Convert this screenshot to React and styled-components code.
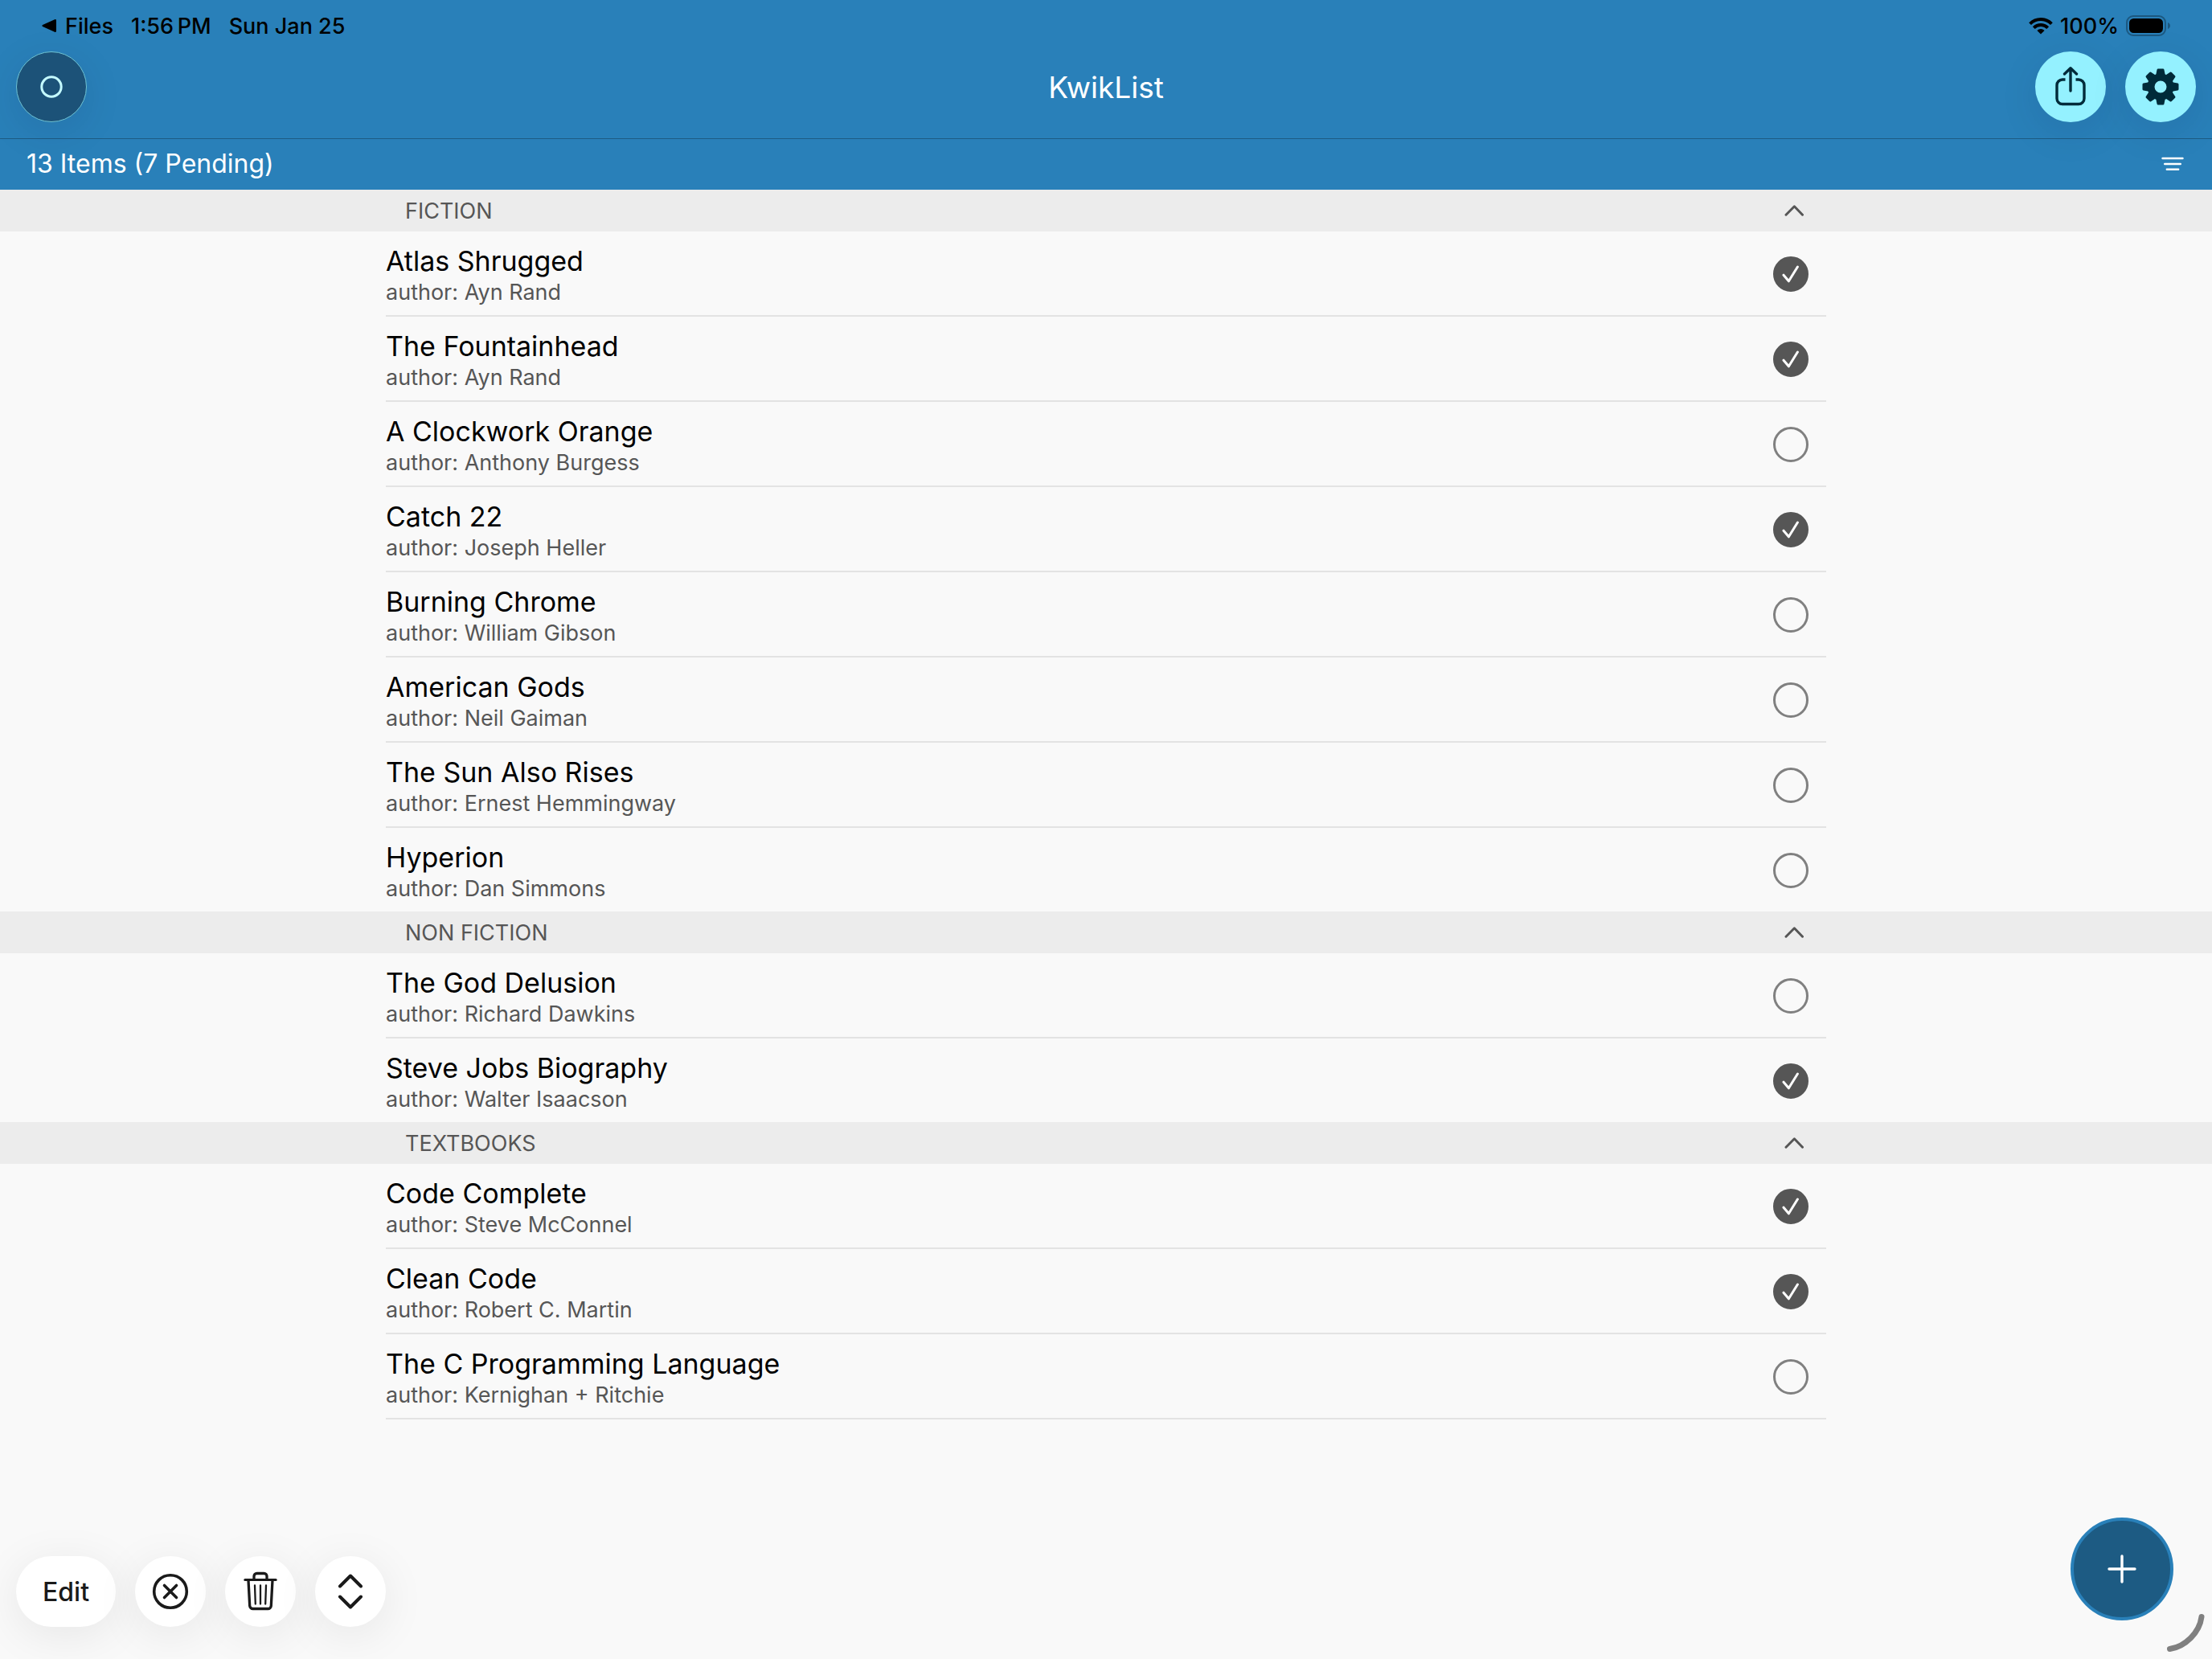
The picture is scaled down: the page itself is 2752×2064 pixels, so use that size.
import React, { useState } from 'react';
import styled, { createGlobalStyle, ThemeProvider } from 'styled-components';

const theme = {
  colors: {
    primary: '#2980b9',
    primaryDark: '#1d5b83',
    navDark: '#1c5278',
    accent: '#94f1ff',
    accentInk: '#002b3a',
    background: '#f9f9f9',
    section: '#ececec',
    line: '#e3e3e3',
    text: '#000000',
    muted: '#565656',
    outline: '#808080',
    ink: '#1a1a1a',
  },
  fonts: {
    body: 'Inter, "Liberation Sans", sans-serif',
  },
  fontSizes: {
    small: '27px',
    medium: '32px',
    title: '34px',
    large: '37px',
  },
};

const GlobalStyle = createGlobalStyle`
  *, *::before, *::after {
    box-sizing: border-box;
  }

  body {
    margin: 0;
    background: ${props => props.theme.colors.background};
    font-family: ${props => props.theme.fonts.body};
  }

  button, input {
    font-family: inherit;
    margin: 0;
  }

  svg {
    display: block;
    flex: none;
  }
`;

const Page = styled.div`
  min-height: 100vh;
  display: flex;
  flex-direction: column;
`;

const Header = styled.header`
  background: ${props => props.theme.colors.primary};
  color: white;
`;

const StatusBar = styled.div`
  display: flex;
  justify-content: space-between;
  align-items: center;
  height: 64px;
  padding: 0 52px 0 51px;
  color: black;
  font-size: ${props => props.theme.fontSizes.small};
  font-weight: 500;
`;

const StatusGroup = styled.div`
  display: flex;
  align-items: center;
  gap: ${props => props.gap}px;
`;

const BackLink = styled.a`
  display: flex;
  align-items: center;
  gap: 10px;
  color: inherit;
  text-decoration: none;
`;

const NavBar = styled.nav`
  display: grid;
  grid-template-columns: 1fr auto 1fr;
  align-items: center;
  padding: 0 20px 20px;
  border-bottom: 1px solid ${props => props.theme.colors.primaryDark};
`;

const NavGroup = styled.div`
  display: flex;
  justify-content: ${props => props.align};
  gap: 24px;
`;

const Title = styled.h1`
  margin: 0;
  font-size: ${props => props.theme.fontSizes.large};
  font-weight: 400;
`;

const RoundButton = styled.button`
  display: flex;
  align-items: center;
  justify-content: center;
  width: 88px;
  height: 88px;
  padding: 0;
  border: none;
  border-radius: 50%;
  background: ${props => props.theme.colors.accent};
  color: ${props => props.theme.colors.accentInk};
  box-shadow: 0 12px 48px rgba(20, 20, 60, 0.1);
  cursor: pointer;
`;

const ListButton = styled(RoundButton)`
  border: 1px solid #6fc3d3;
  background: ${props => props.theme.colors.navDark};
  color: #c4faff;
`;

const Summary = styled.div`
  display: flex;
  justify-content: space-between;
  align-items: center;
  height: 63px;
  padding: 0 35px 2px 33px;
  font-size: ${props => props.theme.fontSizes.medium};
`;

const PlainButton = styled.button`
  padding: 0;
  border: none;
  background: none;
  color: inherit;
  cursor: pointer;
`;

const Main = styled.main`
  flex: 1;
`;

const Column = styled.div`
  max-width: 1792px;
  margin: 0 auto;
`;

const SectionBar = styled.h2`
  margin: 0;
  background: ${props => props.theme.colors.section};
`;

const SectionToggle = styled.button`
  display: flex;
  justify-content: space-between;
  align-items: center;
  width: 100%;
  height: 52px;
  padding: 0 28px 0 24px;
  border: none;
  background: none;
  color: ${props => props.theme.colors.muted};
  font-size: ${props => props.theme.fontSizes.small};
  text-transform: uppercase;
  cursor: pointer;

  svg {
    transform: ${props => (props.$open ? 'none' : 'rotate(180deg)')};
  }
`;

const Items = styled.ul`
  list-style: none;
  margin: 0;
  padding: 0;
`;

const Item = styled.li`
  border-bottom: 2px solid ${props => props.theme.colors.line};

  section:not(:last-child) &:last-child {
    border-bottom: none;
  }
`;

const ItemLabel = styled.label`
  display: flex;
  justify-content: space-between;
  align-items: center;
  height: 104px;
  padding: 2px 22px 0 0;
  cursor: pointer;
`;

const ItemText = styled.span`
  display: flex;
  flex-direction: column;
  padding-top: 2px;
`;

const ItemTitle = styled.span`
  color: ${props => props.theme.colors.text};
  font-size: ${props => props.theme.fontSizes.title};
  line-height: 42px;
`;

const ItemAuthor = styled.span`
  color: ${props => props.theme.colors.muted};
  font-size: ${props => props.theme.fontSizes.small};
  line-height: 35px;
`;

const CheckCell = styled.span`
  display: grid;
  place-items: center;

  > * {
    grid-area: 1 / 1;
  }

  svg {
    pointer-events: none;
  }
`;

const CheckInput = styled.input`
  appearance: none;
  width: 44px;
  height: 44px;
  border: 3px solid ${props => props.theme.colors.outline};
  border-radius: 50%;
  cursor: pointer;

  &:checked {
    border-color: ${props => props.theme.colors.muted};
    background: ${props => props.theme.colors.muted};
  }
`;

const Footer = styled.footer`
  position: sticky;
  bottom: 0;
  display: flex;
  justify-content: space-between;
  align-items: flex-end;
  padding: 0 48px 40px 20px;
`;

const Toolbar = styled.div`
  display: flex;
  gap: 24px;
`;

const ToolButton = styled(RoundButton)`
  width: ${props => (props.$wide ? 'auto' : '88px')};
  padding: ${props => (props.$wide ? '0 33px' : '0')};
  border-radius: 44px;
  background: white;
  color: ${props => props.theme.colors.ink};
  font-size: ${props => props.theme.fontSizes.medium};
  font-weight: 500;
  box-shadow: 0 10px 56px rgba(0, 0, 0, 0.08);
`;

const AddButton = styled(RoundButton)`
  width: 128px;
  height: 128px;
  margin-bottom: 8px;
  border: 4px solid ${props => props.theme.colors.primary};
  background: ${props => props.theme.colors.primaryDark};
  color: white;
  box-shadow: none;
`;

// sits over the page in the bottom right corner
const CornerHandle = styled.svg`
  position: fixed;
  right: 8px;
  bottom: 8px;
`;

const initialSections = [
  {
    name: 'Fiction',
    items: [
      { title: 'Atlas Shrugged', author: 'Ayn Rand', done: true },
      { title: 'The Fountainhead', author: 'Ayn Rand', done: true },
      { title: 'A Clockwork Orange', author: 'Anthony Burgess', done: false },
      { title: 'Catch 22', author: 'Joseph Heller', done: true },
      { title: 'Burning Chrome', author: 'William Gibson', done: false },
      { title: 'American Gods', author: 'Neil Gaiman', done: false },
      { title: 'The Sun Also Rises', author: 'Ernest Hemmingway', done: false },
      { title: 'Hyperion', author: 'Dan Simmons', done: false },
    ],
  },
  {
    name: 'Non Fiction',
    items: [
      { title: 'The God Delusion', author: 'Richard Dawkins', done: false },
      { title: 'Steve Jobs Biography', author: 'Walter Isaacson', done: true },
    ],
  },
  {
    name: 'Textbooks',
    items: [
      { title: 'Code Complete', author: 'Steve McConnel', done: true },
      { title: 'Clean Code', author: 'Robert C. Martin', done: true },
      { title: 'The C Programming Language', author: 'Kernighan + Ritchie', done: false },
    ],
  },
];

const WifiIcon = () => (
  <svg width="30" height="22" viewBox="0 0 30 22" fill="none" stroke="currentColor" strokeWidth="4">
    <path d="M1.6 8.6a19 19 0 0 1 26.8 0" />
    <path d="M6.3 13.6a12.3 12.3 0 0 1 17.4 0" />
    <path d="M10.4 17a6.5 6.5 0 0 1 9.2 0L15 21.6z" fill="currentColor" stroke="none" />
  </svg>
);

const BatteryIcon = () => (
  <svg width="55" height="26" viewBox="0 0 55 26">
    <rect x="1" y="1" width="48" height="24" rx="8" fill="none" stroke="#1c5880" strokeWidth="2" />
    <rect x="4" y="4" width="42" height="18" rx="5.5" fill="#000" />
    <path d="M52 9c2.2 .8 3 2.3 3 4s-.8 3.2-3 4z" fill="#1c5880" />
  </svg>
);

const ShareIcon = () => (
  <svg width="40" height="50" viewBox="0 0 40 50" fill="none" stroke="currentColor" strokeWidth="3.4" strokeLinecap="round" strokeLinejoin="round">
    <path d="M13.5 16H10a7 7 0 0 0-7 7v16.5a7 7 0 0 0 7 7h20a7 7 0 0 0 7-7V23a7 7 0 0 0-7-7h-3.5" strokeLinecap="butt" />
    <path d="M20 30V1.8M12.5 9L20 1.8l7.5 7.2" />
  </svg>
);

const GearIcon = () => (
  <svg width="46" height="46" viewBox="-23 -23 46 46" fill="currentColor" stroke="currentColor">
    <circle r="12" fill="none" strokeWidth="9" />
    {[0, 45, 90, 135, 180, 225, 270, 315].map(angle => (
      <path
        key={angle}
        d="M-4.4 -14L-3 -21h6L4.4 -14z"
        transform={`rotate(${angle})`}
        strokeWidth="3"
        strokeLinejoin="round"
      />
    ))}
  </svg>
);

const FilterIcon = () => (
  <svg width="28" height="18" viewBox="0 0 28 18" fill="none" stroke="currentColor" strokeWidth="2.4" strokeLinecap="round">
    <path d="M1.5 2h25M4.2 9h19.6M6.8 15.7h14.4" />
  </svg>
);

const ChevronIcon = () => (
  <svg width="24" height="14" viewBox="0 0 24 14" fill="none" stroke="currentColor" strokeWidth="3" strokeLinecap="round" strokeLinejoin="round">
    <path d="M2 12.2L12.4 1.8l10.1 10.4" />
  </svg>
);

const TickIcon = () => (
  <svg width="22" height="22" viewBox="0 0 22 22" fill="none" stroke="#fff" strokeWidth="3" strokeLinecap="round" strokeLinejoin="round">
    <path d="M2 12.2l6.4 7.6L19.4 2" />
  </svg>
);

const ClearIcon = () => (
  <svg width="46" height="46" viewBox="0 0 46 46" fill="none" stroke="currentColor" strokeWidth="3.6" strokeLinecap="round">
    <circle cx="23" cy="23" r="20.3" />
    <path d="M15.5 15.5l15 15M30.5 15.5l-15 15" />
  </svg>
);

const TrashIcon = () => (
  <svg width="42" height="50" viewBox="0 0 42 50" fill="none" stroke="currentColor" strokeWidth="3" strokeLinecap="round" strokeLinejoin="round">
    <path d="M1.8 10.5h38.4" />
    <path d="M13 10V6a3.500 3.500 0 0 1 3.500-3.500h9A3.500 3.500 0 0 1 29 6v4" strokeWidth="3.3" />
    <path d="M6 11l1.7 31.8a4 4 0 0 0 4 3.700h18.600a4 4 0 0 0 4-3.700L36 11" strokeWidth="3.3" />
    <path d="M14 17.5l.8 23M21 17.5v23M28 17.5l-.8 23" strokeWidth="2.3" />
  </svg>
);

const SortIcon = () => (
  <svg width="32" height="44" viewBox="0 0 32 44" fill="none" stroke="currentColor" strokeWidth="4" strokeLinecap="round" strokeLinejoin="round">
    <path d="M3 15.500L16 2.500l13 13M3 28.500l13 13 13-13" />
  </svg>
);

function App() {
  const [sections, setSections] = useState(initialSections);
  const [closed, setClosed] = useState([]);

  const items = sections.flatMap(section => section.items);
  const pending = items.filter(item => !item.done).length;

  const toggleSection = name => {
    setClosed(prev => (prev.includes(name) ? prev.filter(n => n !== name) : [...prev, name]));
  };

  const toggleItem = title => {
    setSections(prev =>
      prev.map(section => ({
        ...section,
        items: section.items.map(item => (item.title === title ? { ...item, done: !item.done } : item)),
      }))
    );
  };

  return (
    <ThemeProvider theme={theme}>
      <GlobalStyle />
      <Page>
        <Header>
          <StatusBar>
            <StatusGroup gap={22}>
              <BackLink href="#files">
                <svg width="20" height="18" viewBox="0 0 20 18">
                  <path d="M2 8L17 1.2q2-.7 2 1.3v13q0 2-2 1.3L2 10q-1.5-1 0-2z" />
                </svg>
                Files
              </BackLink>
              <span>1:56&#8239;PM</span>
              <span>Sun Jan 25</span>
            </StatusGroup>
            <StatusGroup gap={9}>
              <WifiIcon />
              <span>100%</span>
              <BatteryIcon />
            </StatusGroup>
          </StatusBar>
          <NavBar>
            <NavGroup align="flex-start">
              <ListButton aria-label="Lists">
                <svg width="28" height="28" viewBox="0 0 28 28" fill="none" stroke="currentColor" strokeWidth="3">
                  <circle cx="14" cy="14" r="12.2" />
                </svg>
              </ListButton>
            </NavGroup>
            <Title>KwikList</Title>
            <NavGroup align="flex-end">
              <RoundButton aria-label="Share">
                <ShareIcon />
              </RoundButton>
              <RoundButton aria-label="Settings">
                <GearIcon />
              </RoundButton>
            </NavGroup>
          </NavBar>
          <Summary>
            <span>{items.length} Items ({pending} Pending)</span>
            <PlainButton aria-label="Filter">
              <FilterIcon />
            </PlainButton>
          </Summary>
        </Header>

        <Main>
          {sections.map(section => {
            const open = !closed.includes(section.name);
            return (
              <section key={section.name}>
                <SectionBar>
                  <Column>
                    <SectionToggle $open={open} aria-expanded={open} onClick={() => toggleSection(section.name)}>
                      {section.name}
                      <ChevronIcon />
                    </SectionToggle>
                  </Column>
                </SectionBar>
                {open && (
                  <Column>
                    <Items>
                      {section.items.map(item => (
                        <Item key={item.title}>
                          <ItemLabel>
                            <ItemText>
                              <ItemTitle>{item.title}</ItemTitle>
                              <ItemAuthor>author: {item.author}</ItemAuthor>
                            </ItemText>
                            <CheckCell>
                              <CheckInput type="checkbox" checked={item.done} onChange={() => toggleItem(item.title)} />
                              {item.done && <TickIcon />}
                            </CheckCell>
                          </ItemLabel>
                        </Item>
                      ))}
                    </Items>
                  </Column>
                )}
              </section>
            );
          })}
        </Main>

        <Footer>
          <Toolbar>
            <ToolButton $wide>Edit</ToolButton>
            <ToolButton aria-label="Clear">
              <ClearIcon />
            </ToolButton>
            <ToolButton aria-label="Delete">
              <TrashIcon />
            </ToolButton>
            <ToolButton aria-label="Sort">
              <SortIcon />
            </ToolButton>
          </Toolbar>
          <AddButton aria-label="Add item">
            <svg width="36" height="36" viewBox="0 0 36 36" fill="none" stroke="currentColor" strokeWidth="3.4" strokeLinecap="round">
              <path d="M18 2v32M2 18h32" />
            </svg>
          </AddButton>
        </Footer>
        <CornerHandle width="50" height="50" viewBox="0 0 50 50" fill="none" stroke="#808080" strokeWidth="7" strokeLinecap="round">
          <path d="M45 5.5C42.5 25 25 42.5 5.5 45.5" />
        </CornerHandle>
      </Page>
    </ThemeProvider>
  );
}

export default App;
